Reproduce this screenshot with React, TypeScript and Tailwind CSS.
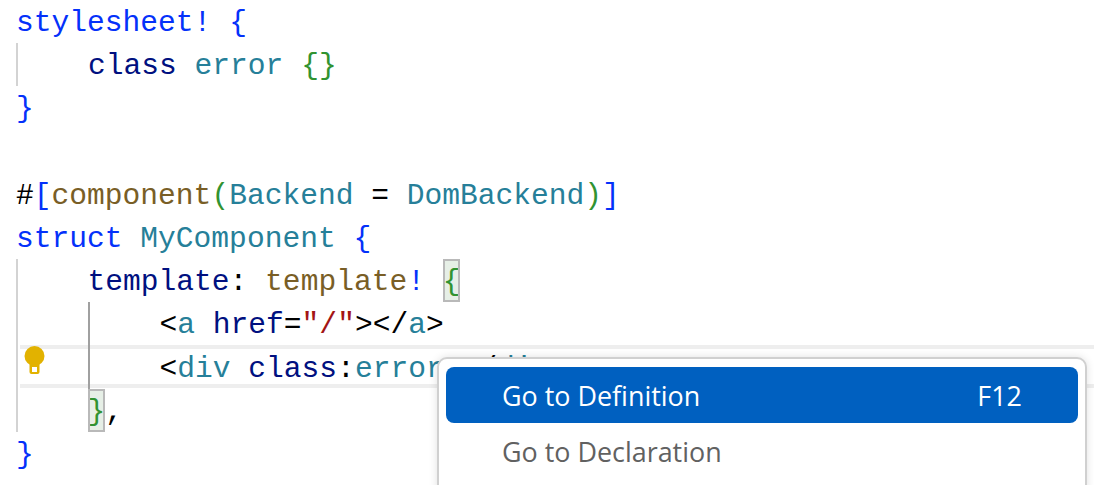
import type { ReactNode } from "react";

const mono = "font-['Liberation_Mono',monospace]";

function Line({ children }: { children?: ReactNode }) {
  return <div className="h-[43.2px] leading-[47px] whitespace-pre">{children}</div>;
}

const Blue = ({ children }: { children: ReactNode }) => <span className="text-[#0431fa]">{children}</span>;
const Navy = ({ children }: { children: ReactNode }) => <span className="text-[#001080]">{children}</span>;
const Teal = ({ children }: { children: ReactNode }) => <span className="text-[#267f99]">{children}</span>;
const Green = ({ children }: { children: ReactNode }) => <span className="text-[#319331]">{children}</span>;
const Brown = ({ children }: { children: ReactNode }) => <span className="text-[#795e26]">{children}</span>;
const Match = ({ children }: { children: ReactNode }) => (
  <span className="inline-block h-[43.2px] align-top bg-[#e6efe6] text-[#319331] outline-2 -outline-offset-2 outline-[#b9b9b9]">{children}</span>
);

function Bulb() {
  return (
    <svg width="22" height="30" viewBox="0 0 22 30" className="absolute left-[24px] top-[-3px]">
      <circle cx="10.5" cy="10" r="10" fill="#e2b200" />
      <path d="M5.5 16 L15.5 16 L15.5 26 Q15.5 28 13.5 28 L7.5 28 Q5.5 28 5.5 26 Z" fill="#e2b200" />
      <rect x="8" y="21" width="5" height="5" fill="#fff" />
    </svg>
  );
}

export default function App() {
  return (
    <div className={`relative w-[1094px] h-[485px] overflow-hidden bg-white text-black text-[29.6px] ${mono}`}>
      <div className="absolute left-[20px] right-0 top-[345px] h-[43px] border-y-4 border-[#eeeeee]">
        <div className="relative h-full"><div className="absolute -left-[20px] top-0"><Bulb /></div></div>
      </div>

      <div className="relative pl-[16px]">
        <Line><Blue>stylesheet! {"{"}</Blue></Line>
        <div className="border-l-2 border-[#d3d3d3] pl-[70px]">
          <Line><Navy>class</Navy> <Teal>error</Teal> <Green>{"{}"}</Green></Line>
        </div>
        <Line><Blue>{"}"}</Blue></Line>
        <Line />
        <Line>#<Blue>[</Blue><Brown>component</Brown><Green>(</Green><Teal>Backend</Teal> = <Teal>DomBackend</Teal><Green>)</Green><Blue>]</Blue></Line>
        <Line><Blue>struct</Blue> <Teal>MyComponent</Teal> <Blue>{"{"}</Blue></Line>
        <div className="border-l-2 border-[#d3d3d3] pl-[69.5px]">
          <Line><Navy>template</Navy>: <Brown>template</Brown><Blue>!</Blue> <Match>{"{"}</Match></Line>
          <div className="border-l-2 border-[#a0a0a0] pl-[70px]">
            <Line>&lt;<Teal>a</Teal> <Navy>href</Navy>=<span className="text-[#a31515]">"/"</span>&gt;&lt;/<Teal>a</Teal>&gt;</Line>
            <Line>&lt;<Teal>div</Teal> <Navy>class</Navy>:<Teal>error</Teal>&gt;&lt;/<Teal>div</Teal>&gt;</Line>
          </div>
          <Line><Match>{"}"}</Match>,</Line>
        </div>
        <Line><Blue>{"}"}</Blue></Line>
      </div>

      <div className="absolute left-[437px] top-[357px] w-[650px] h-[140px] bg-white border-2 border-[#d0d0d0] rounded-[10px] px-[7px] py-[8px] shadow-[0_0_8px_rgba(0,0,0,0.12)] font-['Open_Sans',sans-serif] text-[26.9px]">
        <div className="flex items-center justify-between h-[56px] pt-[2px] rounded-[8px] bg-[#0060c0] text-white pl-[56px] pr-[56px]">
          <span>Go to Definition</span>
          <span>F12</span>
        </div>
        <div className="flex items-center h-[56px] pt-[2px] text-[#616161] pl-[56px]">Go to Declaration</div>
      </div>
    </div>
  );
}
